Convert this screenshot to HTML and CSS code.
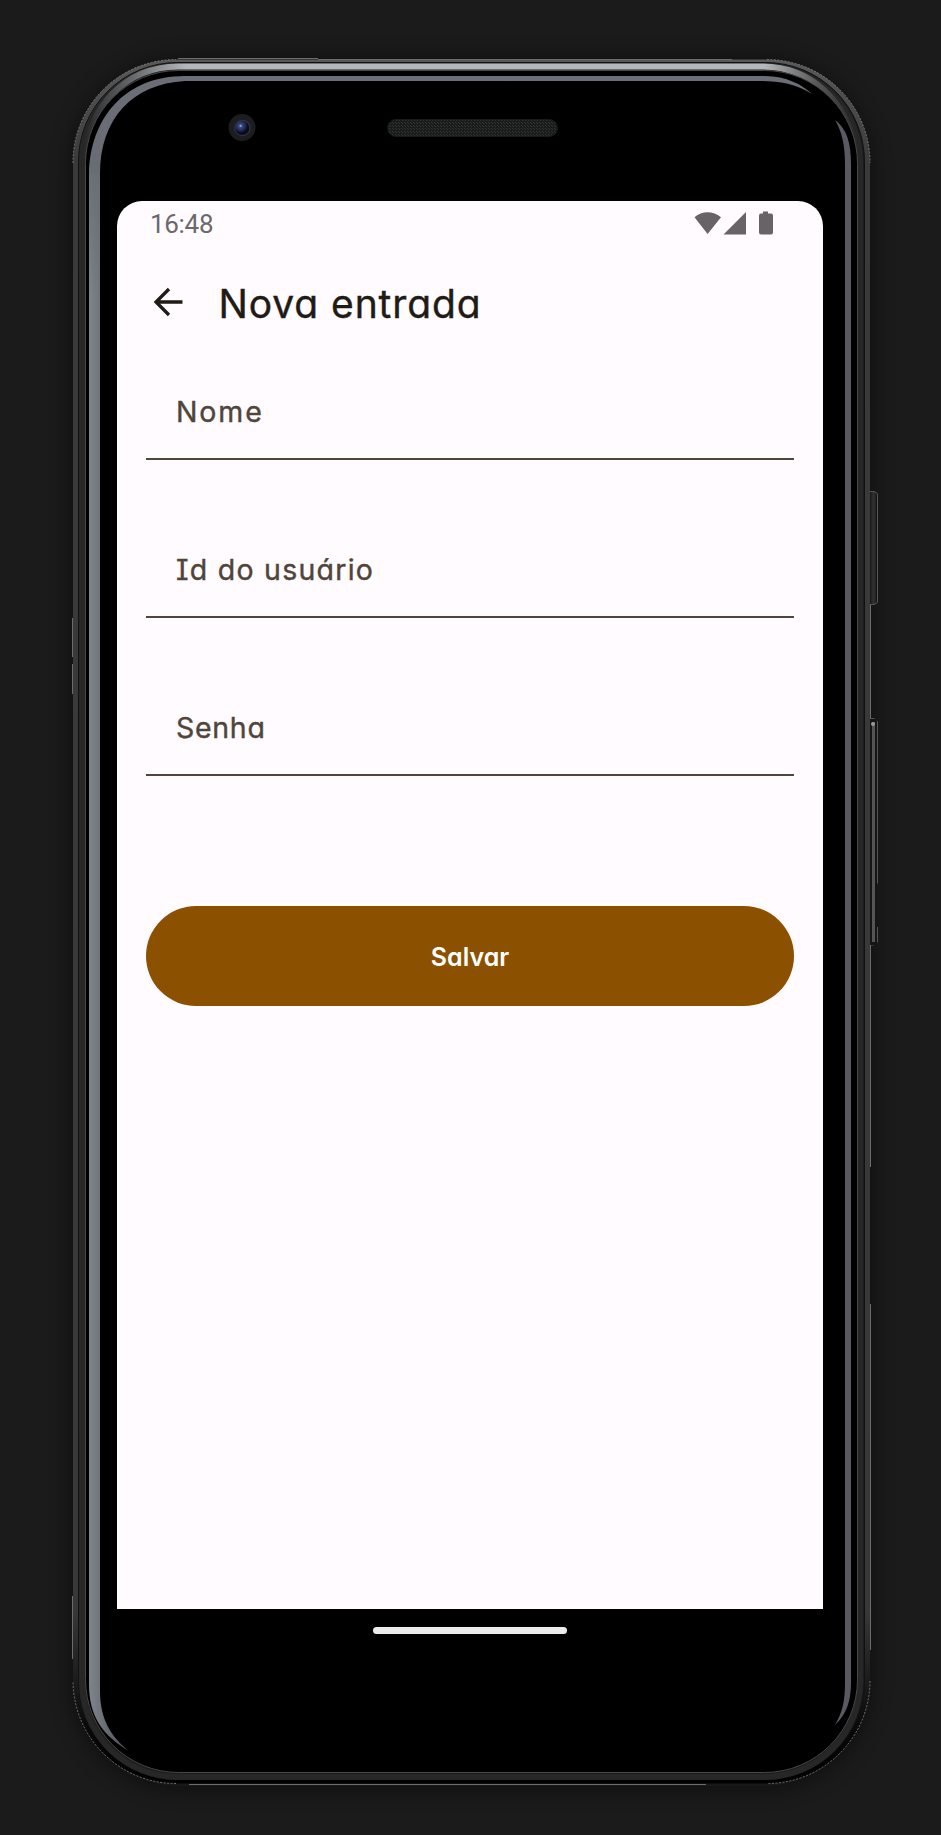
FILE: index.html
```
<!DOCTYPE html>
<html lang="pt-BR">
<head>
<meta charset="utf-8">
<title>Nova entrada</title>
<link rel="stylesheet" href="styles.css">
</head>
<body>
<div class="device">
  <svg class="frame" viewBox="0 0 941 1835" aria-hidden="true">
    <defs>
      <linearGradient id="edge" x1="0" y1="0" x2="0" y2="1"><stop offset="0" stop-color="#595959"/><stop offset=".06" stop-color="#3b3939"/><stop offset=".9" stop-color="#393737"/><stop offset=".97" stop-color="#080808"/><stop offset="1" stop-color="#000"/></linearGradient>
      <linearGradient id="metal" x1="0" y1="0" x2="1" y2="0"><stop offset="0" stop-color="#2a2a2a"/><stop offset=".06" stop-color="#66696c"/><stop offset=".13" stop-color="#b4b7bb"/><stop offset=".88" stop-color="#b4b7bb"/><stop offset=".95" stop-color="#555"/><stop offset="1" stop-color="#282828"/></linearGradient>
      <linearGradient id="glass" x1="0" y1="0" x2="1" y2="0"><stop offset="0" stop-color="#80858b"/><stop offset="1" stop-color="#484d53"/></linearGradient>
      <linearGradient id="glassTop" gradientUnits="userSpaceOnUse" x1="0" y1="76" x2="0" y2="176"><stop offset="0" stop-color="#6c6e77"/><stop offset="1" stop-color="#686c73"/></linearGradient>
      <linearGradient id="glassFade" gradientUnits="userSpaceOnUse" x1="0" y1="150" x2="0" y2="300"><stop offset="0" stop-color="#686c73"/><stop offset="1" stop-color="#686c73" stop-opacity="0"/></linearGradient>
      <linearGradient id="keys" x1="0" y1="0" x2="1" y2="0"><stop offset="0" stop-color="#111"/><stop offset=".6" stop-color="#343434"/><stop offset="1" stop-color="#111"/></linearGradient>
      <radialGradient id="lens" cx=".38" cy=".35"><stop offset="0" stop-color="#a5b5e0"/><stop offset=".25" stop-color="#35487f"/><stop offset=".8" stop-color="#162042"/><stop offset="1" stop-color="#080b18"/></radialGradient>
      <pattern id="mesh" width="3" height="3" patternUnits="userSpaceOnUse"><path fill="#1a1b1b" d="M0 0h3v3H0z"/><path fill="#333535" d="M0 0h1v1H0zM2 2h1v1H2z"/></pattern>
      <filter id="shade" x="-10%" y="-10%" width="120%" height="120%"><feGaussianBlur stdDeviation="12"/></filter>
    </defs>
    <rect x="74" y="62" width="794" height="1724" rx="104" fill="#0a0a0a" opacity=".6" filter="url(#shade)"/>
    <rect x="869" y="491.5" width="8" height="113" rx="2" fill="url(#keys)"/>
    <path d="M870 491.5h4l3.500 2v109l-3.500 2h-4M870 718.500h4l3.500 3v162M877.500 927v15l-3.500 3h-4" fill="none" stroke="#555"/>
    <rect x="869" y="719" width="8" height="226" rx="2" fill="#151515"/>
    <path d="M873.500 722v220" stroke="#555" stroke-width="3"/>
    <circle cx="873" cy="724" r="2" fill="#999"/>
    <rect x="73" y="59.500" width="797" height="1724" rx="103" fill="url(#edge)"/>
    <path d="M178 58.500H318M318 59.500h414M870.500 605v113M870.500 945v222M870.500 1304v346M706 1784.500H189M72.500 1659v-63M72.500 657v-39M72.500 694v-30" fill="none" stroke="#6c6c6c"/>
    <path d="M73 163A103 103 0 0 1 176 59.500M767 59.500A103 103 0 0 1 870 163M870 1681A103 103 0 0 1 767 1783.500M176 1783.500A103 103 0 0 1 73 1681" fill="none" stroke="#888" stroke-width=".8" stroke-dasharray="2 1.500"/>
    <rect x="78.500" y="62.500" width="786" height="1717" rx="99" fill="#1b1b1b" stroke="#111"/>
    <rect x="82" y="66" width="778" height="1711" rx="95" fill="none" stroke="#272727" stroke-width="6"/>
    <path d="M86 158C88 108 124 67 178 66.500H763C812 67 846 101 857 151" fill="none" stroke="url(#metal)" stroke-width="6"/>
    <rect x="85.500" y="70.500" width="772" height="1702" rx="93" fill="#000" stroke="#484848"/>
    <path d="M89 174C90 119 124 76 185 76H765C786 76 803 85 812 94C796 84 780 81 762 81H185C132 84 100 119 100 174Z" fill="url(#glassTop)"/>
    <path d="M89 173V1684C89 1718 104 1736 129 1751C110 1736 100 1718 100 1691V173Z" fill="url(#glass)"/>
    <path d="M89 173H100V300H89Z" fill="url(#glassFade)"/>
    <path d="M835 120C847 129 851 143 851 164V1683C851 1700 847 1714 835 1725C842 1713 845 1702 845 1683V164C845 145 842 132 835 120Z" fill="#595961"/>
    <circle cx="242" cy="127.500" r="13.500" fill="#1b1d20"/>
    <circle cx="242.500" cy="128" r="8.300" fill="#303237"/>
    <circle cx="242.300" cy="128" r="7" fill="url(#lens)"/>
    <rect x="387.500" y="119.500" width="170" height="17" rx="8.500" fill="url(#mesh)" stroke="#191b1b"/>
  </svg>
  <main class="screen">
    <div class="status">
      <span class="clock">16:48</span>
      <svg class="signals" width="80" height="24" viewBox="0 0 80 24" fill="#666467" aria-hidden="true"><path d="M.5 6.300C8-.5 19-.5 27 6.300L13.600 23ZM29.500 23.500 52 1V23.500ZM69 .5h5v2h3q2 0 2 2v17q0 2-2 2H67q-2 0-2-2V4.500q0-2 2-2h2Z"/></svg>
    </div>
    <header class="bar">
      <svg width="30" height="30" viewBox="0 0 30 30" fill="none" stroke="#1f1b16" stroke-width="3.300" aria-hidden="true"><path d="M29.500 15H3M16 2 3 15l13 13"/></svg>
      <h1 class="title">Nova entrada</h1>
    </header>
    <form class="form">
      <label class="field"><span class="name">Nome</span></label>
      <label class="field"><span class="user">Id do usuário</span></label>
      <label class="field"><span class="pass">Senha</span></label>
      <button class="save" type="button">Salvar</button>
    </form>
  </main>
  <div class="home"></div>
</div>
</body>
</html>
```
FILE: styles.css
```
* { box-sizing: border-box; }
body { margin: 0; background: #1b1b1b; font-family: Inter, "Noto Sans", sans-serif; font-feature-settings: "cv11", "cv08", "ss03"; }
.device { position: relative; width: 941px; height: 1835px; padding: 201px 118px 0 117px; overflow: hidden; }
.frame { position: absolute; inset: 0; width: 941px; height: 1835px; }
.screen { position: relative; height: 1408px; background: #fffbff; border-radius: 25px 25px 0 0; }
.status { height: 44px; padding: 9px 49px 0 33px; display: flex; justify-content: space-between; }
.clock { font: 26px/28px Roboto, sans-serif; color: #6b696c; letter-spacing: -.3px; }
.signals { margin-top: .5px; }
.bar { height: 117px; padding: 0 35.5px; display: flex; align-items: center; }
.bar svg { margin-top: -3px; }
.title { margin: 0 0 0 36px; font-size: 39px; line-height: 48px; font-weight: 400; color: #1f1b16; letter-spacing: .9px; white-space: nowrap; -webkit-text-stroke: .4px #1f1b16; }
.form { padding: 0 29px; }
.field { display: flex; align-items: center; height: 98px; margin-bottom: 60px; padding: 3px 30px 0; border-bottom: 2px solid #50453a; font-size: 28.5px; line-height: 34px; font-weight: 400; letter-spacing: .7px; color: #50453a; -webkit-text-stroke: .4px #50453a; }
.field:nth-child(3) { margin-bottom: 130px; }
.name { letter-spacing: 1.9px; }
.user { letter-spacing: 1.25px; }
.save { display: block; width: 100%; height: 100px; border: 0; padding: 2px 0 0; border-radius: 50px; background: #8b5000; color: #fff; font: 600 25px/30px Inter, sans-serif; font-feature-settings: inherit; }
.home { position: relative; width: 194px; height: 7px; margin: 18px auto 0; border-radius: 4px; background: #ececec; }
```
